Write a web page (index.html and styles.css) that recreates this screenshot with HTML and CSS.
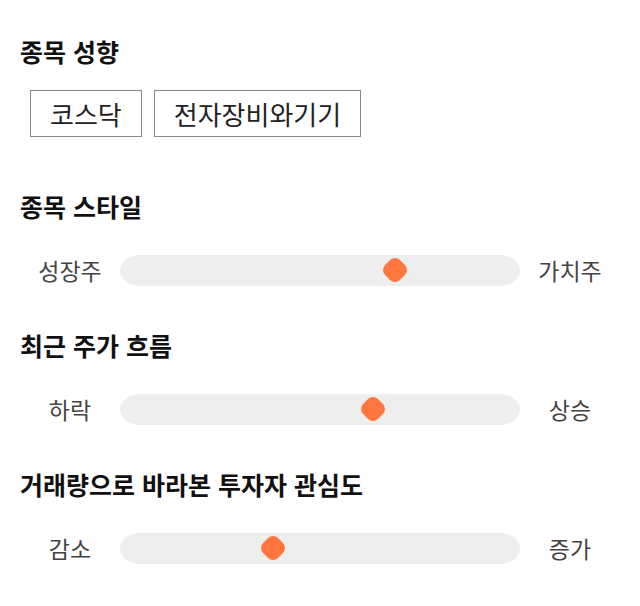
FILE: index.html
```html
<!DOCTYPE html>
<html lang="ko">
<head>
    <meta charset="UTF-8">
    <meta name="viewport" content="width=device-width, initial-scale=1.0">
    <title>종목 성향</title>
    <link rel="stylesheet" href="styles.css">
</head>
<body>
    <div class="container">
        <div class="section">
            <h2 class="section-title">종목 성향</h2>
            <div class="tags">
                <span class="tag">코스닥</span>
                <span class="tag">전자장비와기기</span>
            </div>
        </div>

        <div class="section">
            <h2 class="section-title">종목 스타일</h2>
            <div class="scale">
                <div class="scale-label">성장주</div>
                <div class="track">
                    <div class="thumb" style="left: 68.75%"></div>
                </div>
                <div class="scale-label">가치주</div>
            </div>
        </div>

        <div class="section">
            <h2 class="section-title">최근 주가 흐름</h2>
            <div class="scale">
                <div class="scale-label">하락</div>
                <div class="track">
                    <div class="thumb" style="left: 63.25%"></div>
                </div>
                <div class="scale-label">상승</div>
            </div>
        </div>

        <div class="section">
            <h2 class="section-title">거래량으로 바라본 투자자 관심도</h2>
            <div class="scale">
                <div class="scale-label">감소</div>
                <div class="track">
                    <div class="thumb" style="left: 38.25%"></div>
                </div>
                <div class="scale-label">증가</div>
            </div>
        </div>
    </div>
</body>
</html>
```

FILE: styles.css
```css
* {
    margin: 0;
    padding: 0;
    box-sizing: border-box;
}

body {
    font-family: "Noto Sans CJK KR", "Noto Sans", sans-serif;
    background: white;
    color: #222;
}

.container {
    padding: 35px 20px 20px;
}

.section + .section {
    margin-top: 42px;
}

.section-title {
    font-size: 25px;
    line-height: 32px;
    font-weight: bold;
    color: #111;
}

.tags {
    display: flex;
    gap: 12px;
    padding: 0 0 11px 10px;
    margin-top: 23px;
}

.tag {
    border: 1px solid #888;
    padding: 0 19px;
    height: 47px;
    display: flex;
    align-items: center;
    font-size: 26px;
    color: #222;
}

.scale {
    display: grid;
    grid-template-columns: 100px 1fr 100px;
    align-items: center;
    margin-top: 31px;
}

.scale-label {
    text-align: center;
    font-size: 23px;
    color: #444;
}

.track {
    position: relative;
    height: 31px;
    background: #eeeeee;
    border-radius: 20px / 15.5px;
}

.thumb {
    position: absolute;
    top: 50%;
    width: 21px;
    height: 21px;
    background: #ff763f;
    border-radius: 7px;
    transform: translate(-50%, -50%) rotate(45deg);
}
```
